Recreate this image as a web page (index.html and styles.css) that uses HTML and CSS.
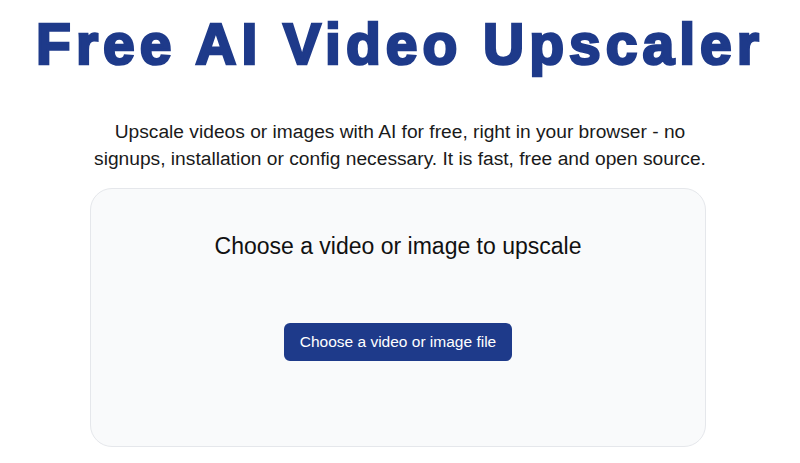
FILE: index.html
```html
<!DOCTYPE html>
<html lang="en">
<head>
    <meta charset="UTF-8">
    <meta name="viewport" content="width=device-width, initial-scale=1.0">
    <title>Free AI Video Upscaler</title>
    <link rel="stylesheet" href="styles.css">
</head>
<body>

<div class="page">
    <h1 class="title">Free AI Video Upscaler</h1>

    <p class="intro">Upscale videos or images with AI for free, right in your browser - no signups, installation or config necessary. It is fast, free and open source.</p>

    <!-- Kotak upload -->
    <div class="upload-card">
        <h2>Choose a video or image to upscale</h2>
        <button class="upload-button" type="button">Choose a video or image file</button>
    </div>
</div>

</body>
</html>
```

FILE: styles.css
```css
body {
    font-family: 'Liberation Sans', Arial, sans-serif;
    margin: 0;
    background-color: #fff;
    color: #111827;
}

.page {
    display: flex;
    flex-direction: column;
    align-items: center;
    text-align: center;
}

.title {
    margin: 11px 0 0;
    font-size: 57px;
    font-weight: bold;
    letter-spacing: 5px;
    color: #1e3a8a;
    -webkit-text-stroke: 2.6px #1e3a8a;
    line-height: 66px;
}

.intro {
    max-width: 640px;
    margin: 41px 0 0;
    font-size: 19.2px;
    line-height: 27px;
    color: #1a1a1a;
}

.upload-card {
    box-sizing: border-box;
    width: 616px;
    margin: 16px 4px 0 0;
    padding: 44px 20px 85px;
    background-color: #f9fafb;
    border: 1px solid #e5e7eb;
    border-radius: 22px;
    display: flex;
    flex-direction: column;
    align-items: center;
}

.upload-card h2 {
    margin: 0;
    font-size: 23px;
    font-weight: normal;
    color: #111;
}

.upload-button {
    margin-top: 63px;
    height: 38px;
    padding: 0 16px;
    font-family: inherit;
    font-size: 15.5px;
    color: #fff;
    background-color: #1e3a8a;
    border: none;
    border-radius: 6px;
    cursor: pointer;
}
```
